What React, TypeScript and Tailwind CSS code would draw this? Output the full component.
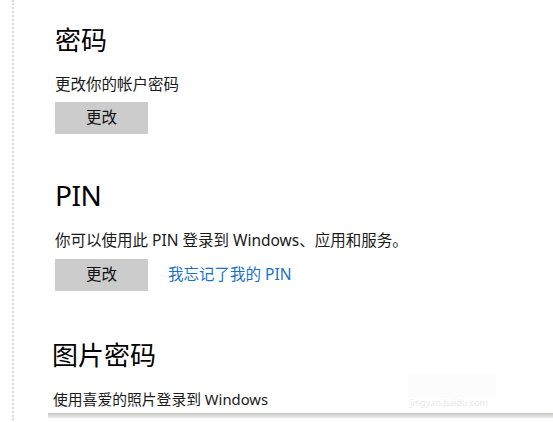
const font = { fontFamily: '"Noto Sans", "Noto Sans CJK SC", sans-serif' };

function GrayButton({ label }: { label: string }) {
  return (
    <button className="flex h-[32px] w-[93px] items-center justify-center bg-[#cccccc] text-[15.5px] text-[#111]">
      {label}
    </button>
  );
}

export default function App() {
  return (
    <div className="relative h-[422px] w-[553px] overflow-hidden bg-white text-black" style={font}>
      <div className="flex h-full">
        <div className="ml-[12px] h-[420px] border-l-2 border-dotted border-[#dcdcdc]" />
        <div className="flex flex-1 flex-col">
          <div className="pl-[41px] pt-[24px]">
            <h2 className="text-[26px] leading-[32px] font-normal">密码</h2>
            <p className="mt-[18px] text-[15.5px] leading-[20px] text-[#1a1a1a]">更改你的帐户密码</p>
            <div className="mt-[8px]">
              <GrayButton label="更改" />
            </div>

            <h2 className="mt-[43px] text-[28px] leading-[36px] font-normal tracking-[-0.5px]">PIN</h2>
            <p className="mt-[17px] text-[15.5px] leading-[20px] text-[#1a1a1a]">
              你可以使用此 PIN 登录到 Windows、应用和服务。
            </p>
            <div className="mt-[9px] flex items-center gap-[20px]">
              <GrayButton label="更改" />
              <a className="text-[15.5px] text-[#1a72c9]">我忘记了我的 PIN</a>
            </div>

            <h2 className="mt-[48px] -ml-[3px] text-[26px] leading-[32px] font-normal">图片密码</h2>
            <p className="mt-[18px] -ml-[2px] text-[14.8px] leading-[20px] text-[#1a1a1a]">
              使用喜爱的照片登录到 Windows
            </p>
          </div>
          <div className="ml-[34px] mt-[4px] h-[5px] bg-gradient-to-b from-[#c3c7c3] to-[#eceeec]" />
        </div>
      </div>
      <div className="absolute left-[408px] top-[374px] h-[24px] w-[88px] bg-[#fcfcfc]" />
      <div className="absolute left-[410px] top-[396px] text-[9px] text-[#e8e8e8]">jingyan.baidu.com</div>
    </div>
  );
}
